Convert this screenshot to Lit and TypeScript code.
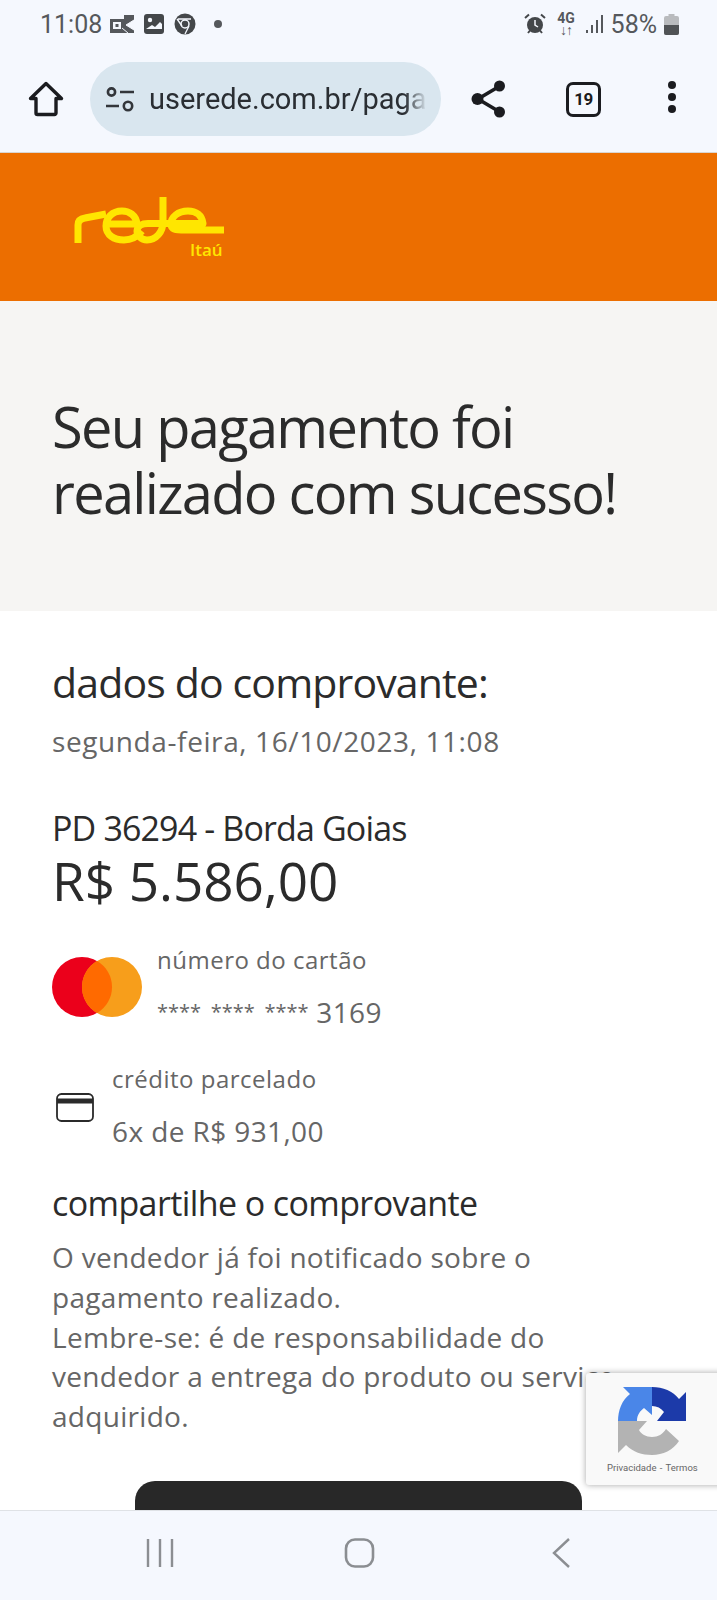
import { LitElement, html, css, svg } from 'lit';
import { customElement } from 'lit/decorators.js';

// Rede wordmark, drawn as one thick line plus the small Itaú tag
const redeLogo = svg`
  <svg class="logo" viewBox="0 0 220 90" width="220" height="90" aria-hidden="true">
    <g fill="none" stroke="#ffe600" stroke-width="7" stroke-linejoin="round">
      <path d="M38 63V45Q38 39 45 38L66 34"/>
      <path d="M68 44H97C96 35 89 31 82 31C72 31 66 38 66 46C66 55 74 60 84 60C91 60 97 57 102 51"/>
      <path d="M123 17V42C123 52 116 60 107 60C101 60 97 55 97 51C97 46 102 43.500 108 43.500H163C162 35 156 31 148 31C138 31 131 37 131 44C131 48 134 50 141 50H184"/>
    </g>
    <text x="150" y="76" class="itau">Itaú</text>
  </svg>`;

const homeIcon = svg`
  <svg viewBox="0 0 36 36" width="36" height="36" aria-hidden="true">
    <path d="M2.500 17.500 18 2.500l15.500 15H28v14.500a1.500 1.500 0 0 1-1.500 1.500h-17A1.500 1.500 0 0 1 8 32V17.500z"
      fill="none" stroke="#1b1c20" stroke-width="3.400" stroke-linejoin="round"/>
  </svg>`;

const tuneIcon = svg`
  <svg viewBox="0 0 30 26" width="30" height="26" aria-hidden="true">
    <g fill="none" stroke="#33363b" stroke-width="2.600">
      <circle cx="6.500" cy="6" r="3.600"/>
      <path d="M15 6h14M1 20h13"/>
      <circle cx="23" cy="20" r="4.200"/>
    </g>
  </svg>`;

const shareIcon = svg`
  <svg viewBox="0 0 36 38" width="36" height="38" aria-hidden="true">
    <path d="M28 6.500 7 19l21 12.500" fill="none" stroke="#1b1c20" stroke-width="3.600"/>
    <circle cx="28.500" cy="6" r="5.500" fill="#1b1c20"/>
    <circle cx="6.500" cy="19" r="6" fill="#1b1c20"/>
    <circle cx="28.500" cy="32" r="5.500" fill="#1b1c20"/>
  </svg>`;

const menuIcon = svg`
  <svg viewBox="0 0 10 34" width="10" height="34" aria-hidden="true">
    <circle cx="5" cy="5" r="4" fill="#1b1c20"/>
    <circle cx="5" cy="17" r="4" fill="#1b1c20"/>
    <circle cx="5" cy="29" r="4" fill="#1b1c20"/>
  </svg>`;

const cardIcon = svg`
  <svg viewBox="0 0 38 29" width="38" height="29" aria-hidden="true">
    <rect x="1" y="1" width="36" height="27" rx="4.500" fill="none" stroke="#2a2a2a" stroke-width="1.800"/>
    <rect x="1" y="5.500" width="36" height="5" fill="#2a2a2a"/>
  </svg>`;

const masterIcon = svg`
  <svg viewBox="0 0 90 60" width="90" height="60" aria-hidden="true">
    <circle cx="30" cy="30" r="30" fill="#eb001b"/>
    <circle cx="60" cy="30" r="30" fill="#f79e1b"/>
    <path d="M45 4a30 30 0 0 1 0 52a30 30 0 0 1 0-52z" fill="#ff6a00"/>
  </svg>`;

const captchaIcon = svg`
  <svg viewBox="0 0 72 72" width="72" height="72" aria-hidden="true">
    <path d="M2 36H21C21 30 24 26 28 23L36 30V2H7L14 9C6 15 2 25 2 36Z" fill="#4a86e8"/>
    <path d="M36 2V21C41 21 45 23 48 27L41 36H70V7L63 14C57 6 47 2 36 2Z" fill="#1c3aa9"/>
    <path d="M2 36V68L10 60C17 67 26 70 36 70C47 70 57 65 63 56L50 44C47 49 42 52 36 52C30 52 25 49 23 45L31 36Z" fill="#b3b3b3"/>
  </svg>`;

const alarmIcon = svg`
  <svg viewBox="0 0 22 22" width="22" height="22" aria-hidden="true">
    <circle cx="11" cy="12" r="8" fill="#44474a"/>
    <path d="M11 7v5l3 2" fill="none" stroke="#f5f8fe" stroke-width="1.500"/>
    <path d="M1 5l4-3.500M21 5l-4-3.500M4 20l2-2.500M18 20l-2-2.500" stroke="#44474a" stroke-width="2"/>
  </svg>`;

const signalIcon = svg`
  <svg viewBox="0 0 18 20" width="18" height="20" aria-hidden="true">
    <g fill="#55585c">
      <rect x="0" y="16" width="2" height="3"/>
      <rect x="5" y="11" width="2" height="8"/>
      <rect x="10" y="6" width="2" height="13"/>
      <rect x="15" y="1" width="2" height="18"/>
    </g>
  </svg>`;

const batteryIcon = svg`
  <svg viewBox="0 0 15 21" width="15" height="21" aria-hidden="true">
    <path d="M4.500 0h6v2h2.500a2 2 0 0 1 2 2v15a2 2 0 0 1-2 2H2a2 2 0 0 1-2-2V4a2 2 0 0 1 2-2h2.500z" fill="#b9bbbe"/>
    <path d="M0 11h15v8a2 2 0 0 1-2 2H2a2 2 0 0 1-2-2z" fill="#505356"/>
  </svg>`;

const notifIcons = svg`
  <svg viewBox="0 0 24 20" width="24" height="20" aria-hidden="true">
    <path d="M0 5h14V1h10v18H0z" fill="#55585c"/>
    <rect x="3" y="8" width="8" height="7" fill="#f5f8fe"/>
    <rect x="5.500" y="10" width="3" height="3" fill="#55585c"/>
    <path d="M24 6l-8 5 8 5M12 14l6 5" fill="#f5f8fe" stroke="#f5f8fe"/>
  </svg>
  <svg viewBox="0 0 22 22" width="22" height="22" aria-hidden="true">
    <rect x="1" y="1" width="20" height="20" rx="3" fill="#44474a"/>
    <circle cx="7" cy="7" r="2.200" fill="#f5f8fe"/>
    <path d="M3 16l6-4 3 2 5-5 2 2v5H3z" fill="#f5f8fe"/>
  </svg>
  <svg viewBox="0 0 22 22" width="22" height="22" aria-hidden="true">
    <circle cx="11" cy="11" r="10.500" fill="#44474a"/>
    <circle cx="11" cy="11" r="4" fill="none" stroke="#f5f8fe" stroke-width="1.500"/>
    <path d="M4 6h13M15 13l-4 8M8 13 3 6" stroke="#f5f8fe" stroke-width="1.300"/>
  </svg>`;

@customElement('app-root')
export class AppRoot extends LitElement {
  static styles = css`
    :host {
      display: block;
      position: relative;
      width: 717px;
      height: 1600px;
      overflow: hidden;
      background: #fff;
      font-family: 'Open Sans', 'Noto Sans', sans-serif;
    }
    .page { display: flex; flex-direction: column; height: 1600px; }

    .chrome { background: #f5f8fe; height: 153px; flex: none; box-sizing: border-box; border-bottom: 1px solid #d9d5d0; }
    .status {
      display: flex;
      align-items: center;
      height: 48px;
      padding: 0 38px 0 40px;
      font-family: Roboto, sans-serif;
      font-size: 25px;
      color: #55585c;
    }
    .status .group { display: flex; align-items: center; gap: 9px; }
    .status .time { margin-right: -1px; }
    .status .dot { width: 8px; height: 8px; border-radius: 50%; background: #55585c; margin-left: 9px; }
    .status .right { margin-left: auto; display: flex; align-items: center; gap: 7px; }
    .net { font-size: 14px; line-height: 12px; font-weight: 700; text-align: center; width: 21px; margin: 0 2px 0 3px; }
    .net small { display: block; font-size: 14px; letter-spacing: -1px; }

    .toolbar { display: flex; align-items: center; height: 74px; margin-top: 14px; padding-left: 28px; }
    .home { width: 36px; height: 36px; margin-right: 26px; }
    .pill {
      display: flex;
      align-items: center;
      width: 351px;
      height: 74px;
      box-sizing: border-box;
      padding: 0 14px 0 15px;
      border-radius: 37px;
      background: #d9e6ef;
      font-family: Roboto, sans-serif;
      font-size: 29px;
      color: #2a2e33;
      overflow: hidden;
    }
    .pill svg { flex: none; margin-right: 14px; }
    .url { overflow: hidden; white-space: nowrap; flex: 1; -webkit-mask-image: linear-gradient(to right, #000 92%, transparent); }
    .share { margin-left: 30px; padding-top: 4px; }
    .tabs {
      width: 29px;
      height: 29px;
      margin-left: 59px;
      border: 3.500px solid #1b1c20;
      border-radius: 7px;
      display: flex;
      align-items: center;
      justify-content: center;
      font: 700 17px 'Roboto', sans-serif;
      letter-spacing: -0.500px;
      color: #1b1c20;
    }
    .menu { margin-left: 66px; padding-top: 1px; }

    .brand { background: #ec6e00; height: 148px; flex: none; display: flex; align-items: center; padding-left: 40px; box-sizing: border-box; }
    .itau { font: 600 17px 'Open Sans', sans-serif; fill: #ffe600; }
    .logo { margin-top: -4px; }

    .hero { background: #f6f5f3; height: 310px; flex: none; box-sizing: border-box; padding: 92px 0 0 52px; }
    h1 {
      margin: 0;
      font-weight: 400;
      font-size: 56px;
      line-height: 66px;
      letter-spacing: -1.700px;
      color: #2b2b2b;
    }

    main { flex: 1; min-height: 0; padding: 45px 0 0 52px; color: #666; overflow: hidden; }
    h2 { margin: 0; font-weight: 400; font-size: 41px; line-height: 52px; letter-spacing: -0.850px; color: #2b2b2b; }
    .date { font-size: 28px; line-height: 38px; margin-top: 14px; letter-spacing: 0.600px; }
    .title { margin-top: 46px; font-size: 34px; line-height: 44px; letter-spacing: -0.860px; color: #2b2b2b; }
    .amount { font-size: 53px; line-height: 62px; color: #2b2b2b; margin-top: 0; }
    .row { display: flex; align-items: center; }
    .row.master { margin-top: 30px; }
    .row.credit { margin-top: 31px; }
    .row.master svg { margin: 2px 15px 0 0; }
    .row.credit svg { margin: 4px 18px 0 4px; }
    .label { font-size: 24px; line-height: 36px; letter-spacing: 0.500px; }
    .value { font-size: 28px; line-height: 36px; margin-top: 16px; letter-spacing: 0.400px; }
    .stars { font-size: 20px; word-spacing: 4.500px; letter-spacing: 0; vertical-align: 4px; }
    h3 { margin: 32px 0 0; font-weight: 400; font-size: 34px; line-height: 44px; letter-spacing: -0.600px; color: #2b2b2b; }
    p { margin: 13px 0 0; font-size: 28px; line-height: 39.800px; letter-spacing: 0.300px; white-space: nowrap; }
    .cta { margin: 44px 0 0 83px; width: 447px; height: 60px; background: #282828; border-radius: 20px 20px 0 0; }

    .nav {
      flex: none;
      height: 90px;
      box-sizing: border-box;
      border-top: 1px solid #dfe2e6;
      background: #f5f8fe;
      display: grid;
      grid-template-columns: 100px 300px 102px;
      align-items: center;
      justify-items: center;
      padding: 0 0 6px 110px;
    }
    .nav svg { display: block; }

    .captcha {
      position: absolute;
      left: 586px;
      top: 1373px;
      width: 140px;
      height: 112px;
      box-sizing: border-box;
      padding-top: 12px;
      padding-left: 30px;
      background: #f9f9f9;
      border-radius: 3px;
      box-shadow: 0 0 6px rgba(0, 0, 0, 0.35);
      font: 9.500px Roboto, sans-serif;
      color: #666;
    }
    .captcha svg { display: block; }
    .captcha span { display: block; margin: 5px 0 0 -9px; white-space: nowrap; word-spacing: 1px; }
  `;

  render() {
    return html`
      <div class="page">
        <div class="chrome">
          <div class="status">
            <div class="group">
              <span class="time">11:08</span>
              ${notifIcons}
              <span class="dot"></span>
            </div>
            <div class="right">
              ${alarmIcon}
              <div class="net">4G<small>↓↑</small></div>
              ${signalIcon}
              <span>58%</span>
              ${batteryIcon}
            </div>
          </div>
          <div class="toolbar">
            <div class="home">${homeIcon}</div>
            <div class="pill">${tuneIcon}<span class="url">userede.com.br/pagamento</span></div>
            <div class="share">${shareIcon}</div>
            <div class="tabs">19</div>
            <div class="menu">${menuIcon}</div>
          </div>
        </div>

        <div class="brand">${redeLogo}</div>

        <section class="hero">
          <h1>Seu pagamento foi<br />realizado com sucesso!</h1>
        </section>

        <main>
          <h2>dados do comprovante:</h2>
          <div class="date">segunda-feira, 16/10/2023, 11:08</div>
          <div class="title">PD 36294 - Borda Goias</div>
          <div class="amount">R$ 5.586,00</div>
          <div class="row master">
            ${masterIcon}
            <div>
              <div class="label">número do cartão</div>
              <div class="value"><span class="stars">**** **** ****</span> 3169</div>
            </div>
          </div>
          <div class="row credit">
            ${cardIcon}
            <div>
              <div class="label">crédito parcelado</div>
              <div class="value">6x de R$ 931,00</div>
            </div>
          </div>
          <h3>compartilhe o comprovante</h3>
          <p>O vendedor já foi notificado sobre o<br />pagamento realizado.<br />Lembre-se: é de responsabilidade do<br />vendedor a entrega do produto ou serviço<br />adquirido.</p>
          <div class="cta"></div>
        </main>

        <nav class="nav">
          <svg viewBox="0 0 28 30" width="28" height="30" aria-hidden="true">
            <path d="M2 1v28M14 1v28M26 1v28" stroke="#8b8e92" stroke-width="2.400" fill="none"/>
          </svg>
          <svg viewBox="0 0 32 30" width="32" height="30" aria-hidden="true">
            <rect x="2" y="1.500" width="27" height="27" rx="9" stroke="#8b8e92" stroke-width="2.600" fill="none"/>
          </svg>
          <svg viewBox="0 0 20 32" width="20" height="32" aria-hidden="true">
            <path d="M18 2 3 16l15 14" stroke="#8b8e92" stroke-width="2.400" fill="none"/>
          </svg>
        </nav>
      </div>

      <aside class="captcha">${captchaIcon}<span>Privacidade - Termos</span></aside>
    `;
  }
}

declare global {
  interface HTMLElementTagNameMap {
    'app-root': AppRoot;
  }
}
